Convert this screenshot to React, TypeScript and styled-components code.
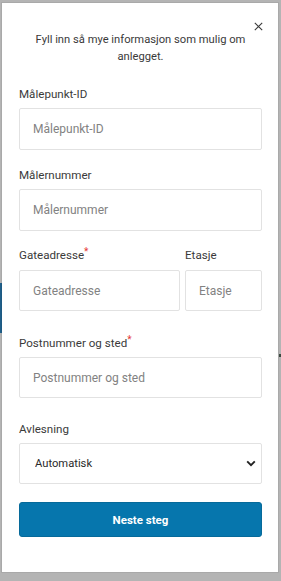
import React from "react";
import styled, { createGlobalStyle } from "styled-components";

const Global = createGlobalStyle`
  html, body { margin: 0; padding: 0; background: #b4b4b4; }
  body { font-family: Roboto, "Liberation Sans", Arial, sans-serif; }
  * { box-sizing: border-box; }
`;

const Backdrop = styled.div`
  position: relative;
  width: 281px;
  height: 581px;
  padding: 3px 3px 9px 2px;
  display: flex;
`;

const BehindStripe = styled.div<{ $left?: number; $right?: number; $top: number; $h: number; $c: string }>`
  position: absolute;
  top: ${(p) => p.$top}px;
  ${(p) => (p.$left !== undefined ? `left: ${p.$left}px;` : `right: ${p.$right}px;`)}
  width: 2px;
  height: ${(p) => p.$h}px;
  background: ${(p) => p.$c};
`;

const Modal = styled.div`
  position: relative;
  flex: 1;
  background: #fff;
  box-shadow: 0 0 0 1px rgba(0, 0, 0, 0.06);
  padding: 29px 16px 0 17px;
  display: flex;
  flex-direction: column;
`;

const Close = styled.button`
  position: absolute;
  top: 15px;
  right: 12px;
  width: 16px;
  height: 16px;
  padding: 0;
  border: none;
  background: transparent;
  display: flex;
  align-items: center;
  justify-content: center;
`;

const Title = styled.p`
  margin: 0 8px 21px;
  text-align: center;
  font-size: 11.2px;
  line-height: 16.5px;
  color: #3a3a3a;
`;

const Group = styled.div<{ $mb: number }>`
  display: flex;
  flex-direction: column;
  margin-bottom: ${(p) => p.$mb}px;
`;

const Row = styled.div<{ $mb: number }>`
  display: grid;
  grid-template-columns: 161px 77px;
  column-gap: 5px;
  margin-bottom: ${(p) => p.$mb}px;
`;

const Label = styled.label<{ $gap?: number }>`
  font-size: 11.6px;
  line-height: 16px;
  color: #3a3a3a;
  margin-bottom: ${(p) => p.$gap ?? 6}px;
  white-space: nowrap;
`;

const Star = styled.span`
  color: #e53935;
  font-size: 10px;
  vertical-align: top;
  position: relative;
  top: -3px;
`;

const Input = styled.input<{ $h: number }>`
  width: 100%;
  height: ${(p) => p.$h}px;
  border: 1px solid #e2e2e2;
  border-radius: 2px;
  padding: 0 0 0 13px;
  font-family: inherit;
  font-size: 12px;
  color: #333;
  background: #fff;
  outline: none;
  &::placeholder { color: #828282; }
`;

const SelectWrap = styled.div`
  position: relative;
  height: 41px;
`;

const Select = styled.select`
  appearance: none;
  -webkit-appearance: none;
  width: 100%;
  height: 100%;
  border: 1px solid #e2e2e2;
  border-radius: 2px;
  padding: 0 0 0 15px;
  font-family: inherit;
  font-size: 11.2px;
  color: #2a2a2a;
  background: #fff;
  outline: none;
`;

const Chevron = styled.svg`
  position: absolute;
  right: 6px;
  top: 17px;
  pointer-events: none;
`;

const Button = styled.button`
  height: 35px;
  width: 100%;
  border: 1px solid #066a9a;
  border-radius: 3px;
  background: #0676ad;
  color: #fff;
  font-family: inherit;
  font-weight: 700;
  font-size: 11.5px;
`;

export default function App() {
  return (
    <>
      <Global />
      <Backdrop>
        <BehindStripe $left={0} $top={283} $h={50} $c="#1f5f8a" />
        <BehindStripe $right={0} $top={354} $h={3} $c="#3c4a40" />
        <Modal>
          <Close aria-label="Lukk">
            <svg width="9" height="9" viewBox="0 0 9 9">
              <path d="M0.8 0.8 L8.2 8.2 M8.2 0.8 L0.8 8.2" stroke="#3a3a3a" strokeWidth="1.1" />
            </svg>
          </Close>
          <Title>Fyll inn så mye informasjon som mulig om anlegget.</Title>
          <Group $mb={17}>
            <Label>Målepunkt-ID</Label>
            <Input $h={42} placeholder="Målepunkt-ID" />
          </Group>
          <Group $mb={16}>
            <Label>Målernummer</Label>
            <Input $h={42} placeholder="Målernummer" />
          </Group>
          <Row $mb={24}>
            <Group $mb={0}>
              <Label $gap={7}>
                Gateadresse<Star>*</Star>
              </Label>
              <Input $h={41} placeholder="Gateadresse" />
            </Group>
            <Group $mb={0}>
              <Label $gap={7}>Etasje</Label>
              <Input $h={41} placeholder="Etasje" />
            </Group>
          </Row>
          <Group $mb={23}>
            <Label>
              Postnummer og sted<Star>*</Star>
            </Label>
            <Input $h={41} placeholder="Postnummer og sted" />
          </Group>
          <Group $mb={18}>
            <Label>Avlesning</Label>
            <SelectWrap>
              <Select defaultValue="auto">
                <option value="auto">Automatisk</option>
                <option value="manuell">Manuell</option>
              </Select>
              <Chevron width="10" height="7" viewBox="0 0 10 7">
                <path d="M1.2 1.3 L5 5.1 L8.8 1.3" fill="none" stroke="#222" strokeWidth="1.9" />
              </Chevron>
            </SelectWrap>
          </Group>
          <Button>Neste steg</Button>
        </Modal>
      </Backdrop>
    </>
  );
}
